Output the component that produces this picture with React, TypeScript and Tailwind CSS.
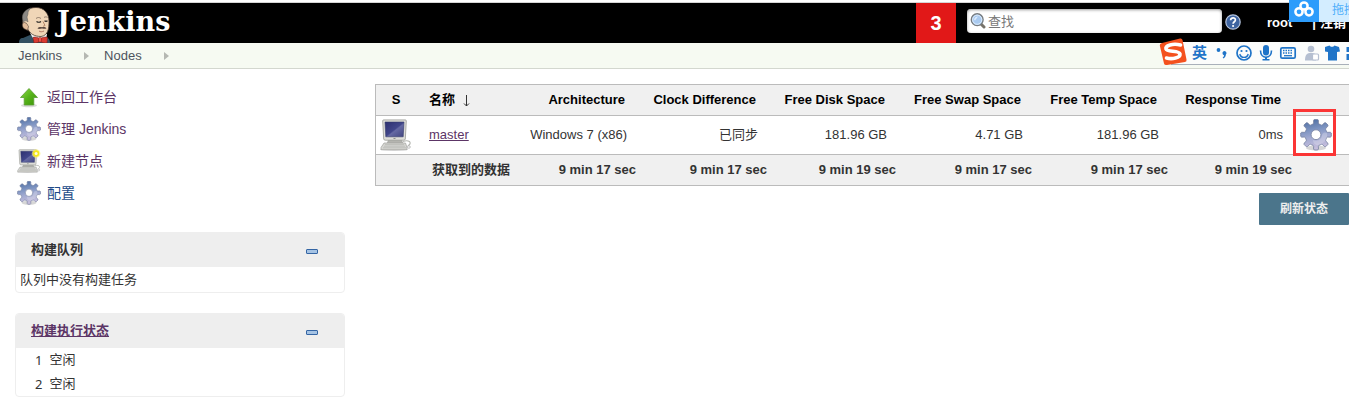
import React, { useId } from 'react';

const TEETH = 8;

function gearPath(cx: number, cy: number, outer: number, inner: number) {
  const points: string[] = [];
  for (let i = 0; i < TEETH; i++) {
    const a = (i * 2 * Math.PI) / TEETH - Math.PI / 2;
    const corners: [number, number][] = [
      [-0.39, inner],
      [-0.27, inner],
      [-0.2, inner + 0.9],
      [-0.17, outer - 0.9],
      [-0.11, outer],
      [0.11, outer],
      [0.17, outer - 0.9],
      [0.2, inner + 0.9],
      [0.27, inner],
    ];
    for (const [offset, r] of corners) {
      points.push(`${(cx + r * Math.cos(a + offset)).toFixed(2)} ${(cy + r * Math.sin(a + offset)).toFixed(2)}`);
    }
  }
  return `M${points.join('L')}Z`;
}

function GearIcon({ className }: { className: string }) {
  const id = useId();
  return (
    <svg viewBox="0 0 32 32" className={className} aria-hidden="true">
      <defs>
        <linearGradient id={id} x1="0.3" y1="0" x2="0.5" y2="1">
          <stop offset="0" stopColor="#4f6fa3" />
          <stop offset="0.35" stopColor="#7f95c2" />
          <stop offset="0.6" stopColor="#a3abd2" />
          <stop offset="1" stopColor="#cbc0de" />
        </linearGradient>
      </defs>
      <ellipse cx="16" cy="29" rx="10" ry="2.6" fill="#000" opacity="0.16" />
      <path
        d={`${gearPath(16, 15.7, 15.4, 11)}M20.9 15.7a4.900 4.900 0 1 0-9.800 0a4.900 4.900 0 1 0 9.800 0Z`}
        fillRule="evenodd"
        fill={`url(#${id})`}
        stroke="#75809f"
        strokeWidth="0.8"
        strokeLinejoin="round"
      />
      <path d="M13 21c5 2 9-1 9-5c1-3 3-3 5-2c1 6-3 11-9 12c-3 0-5-2-5-5z" fill="#fff" opacity="0.22" />
    </svg>
  );
}

function ComputerIcon({ className, isNew = false }: { className: string; isNew?: boolean }) {
  const id = useId();
  return (
    <svg viewBox="0 0 32 32" className={className} aria-hidden="true">
      <defs>
        <linearGradient id={id} x1="0" y1="0" x2="1" y2="1">
          <stop offset="0" stopColor="#2c2f70" />
          <stop offset="0.5" stopColor="#41468a" />
          <stop offset="0.56" stopColor="#6569a3" />
          <stop offset="1" stopColor="#40447f" />
        </linearGradient>
      </defs>
      <ellipse cx="14" cy="30.5" rx="14" ry="1.4" fill="#000" opacity="0.15" />
      <path d="M9 20h12l2 4.500H7z" fill="#b4b4af" stroke="#999b96" strokeWidth="0.600" />
      <path d="M23 22.500c6-2 9 1 6 3.500l-1 1" fill="none" stroke="#b5b7b1" strokeWidth="1.100" />
      <path d="M4 24h21.500l1.500 4.500v2.200H1v-2.200z" fill="#d6d6d2" stroke="#a0a29d" strokeWidth="0.700" />
      <path d="M5 25.600h19M4 27.200h21M3 28.800h23" stroke="#b3b5b0" strokeWidth="0.700" />
      <path d="M3.700.9h21.600a1 1 0 0 1 1 1L25.300 20a1.500 1.500 0 0 1-1.500 1.200H5.200A1.500 1.500 0 0 1 3.700 20L2.700 1.900a1 1 0 0 1 1-1z" fill="#deded9" stroke="#999b96" strokeWidth="0.800" />
      <path d="M5 3h19l-.8 14.800H5.800z" fill={`url(#${id})`} stroke="#343a69" strokeWidth="0.600" />
      <path d="M13.500 19.500h2" stroke="#7a7c77" strokeWidth="0.800" />
      <ellipse cx="28.800" cy="28" rx="1.600" ry="1.300" fill="#eee" stroke="#aaa" strokeWidth="0.600" />
      {isNew && (
        <g>
          <circle cx="25.500" cy="6" r="5.800" fill="#fdf37a" opacity="0.65" />
          <circle cx="25.500" cy="6" r="4.200" fill="#f6e91a" />
          <circle cx="25.500" cy="6" r="2" fill="#fffde0" />
        </g>
      )}
    </svg>
  );
}

function UpIcon() {
  return (
    <svg viewBox="0 0 24 24" className="size-6" aria-hidden="true">
      <defs>
        <linearGradient id="up-green" x1="0" y1="0" x2="1" y2="1">
          <stop offset="0" stopColor="#8ddb45" />
          <stop offset="0.5" stopColor="#56b21a" />
          <stop offset="1" stopColor="#3c9407" />
        </linearGradient>
      </defs>
      <ellipse cx="12" cy="20.500" rx="8" ry="1.800" fill="#000" opacity="0.15" />
      <path d="M12 3.500 20.500 12.500h-3.700V20H7.200v-7.500H3.500z" fill="url(#up-green)" stroke="#5a9c33" strokeWidth="0.800" strokeLinejoin="round" />
    </svg>
  );
}

function Butler() {
  return (
    <svg viewBox="0 0 34 37" className="h-[37px] w-[34px]" aria-hidden="true">
      <path d="M1 37c0-3 1-5 4-5l7-3 16 2c3 1 4 3 4 6z" fill="#335061" />
      <path d="M12 27l4 7 5 2 7-2 1-6z" fill="#f5f5f5" />
      <path d="M5 14C4 6 10 1.500 18 1.500c8 0 13 6 13 13.500 0 8-1 14.500-8 15.500-7 0-11-3-13-7-4 0-6-7-5-9.500z" fill="#f0d6b7" stroke="#4a3b32" strokeWidth="0.800" />
      <path d="M5.500 16C2.500 9 6 4 13 2c-3 3-3 4-3 6l-1 3 1 5c-1-1-3-2-4.500 0z" fill="#8c8984" stroke="#5f5d59" strokeWidth="0.500" />
      <path d="M6.500 16.500c-3.500 0-2.500 6.500 1.500 7l1.500 1 1-4c-1-1-1-3.500-4-4z" fill="#e2bd9b" stroke="#4a3b32" strokeWidth="0.600" />
      <path d="M18 12.500c1.500-1.300 3.500-1.300 5 0M26 11.500c1-.8 2.500-.8 3.500 0" fill="none" stroke="#7a6759" strokeWidth="0.800" />
      <path d="M18.500 15.500q2.500 1.500 4.500 0M26.500 14.800q1.500 1.200 3 0" fill="none" stroke="#222" strokeWidth="1.100" />
      <path d="M25 15.500l2 4-2 .8" fill="none" stroke="#a37357" strokeWidth="0.800" />
      <path d="M19.500 22.500c1-1.500 3-1.700 4.500-1.200 1.500-.5 3.500-.3 4.500 1-1.500 1-3 .2-4.500.2s-3 1-4.500 0z" fill="#5b4a42" />
      <path d="M21 25c1.500 1 3 1 5 0" fill="none" stroke="#a3604f" strokeWidth="0.800" />
      <path d="M15 31.500c2-1 5 0 7 1.500 2-1.500 5-2.500 7.500-1.500L29 37c-3 0-5-.500-7-1.500-2 1-4 1.500-6 1.500z" fill="#d93a32" stroke="#7d1c16" strokeWidth="0.600" />
      <rect x="20.500" y="31.500" width="3" height="4.500" rx="1" fill="#ee5148" stroke="#7d1c16" strokeWidth="0.500" />
    </svg>
  );
}

function SearchIcon() {
  return (
    <svg viewBox="0 0 16 16" className="size-4 shrink-0" aria-hidden="true">
      <path d="M11 11l3 3" stroke="#77736a" strokeWidth="3" strokeLinecap="round" />
      <circle cx="7.200" cy="6.700" r="5.900" fill="#a9caf0" stroke="#777c80" strokeWidth="1.400" />
      <circle cx="7.200" cy="6.700" r="4.600" fill="none" stroke="#e3effc" strokeWidth="0.900" />
      <path d="M4 6.500c.5-2 2-3 4-3l-3 4z" fill="#dcebfc" />
    </svg>
  );
}

function HelpIcon() {
  return (
    <svg viewBox="0 0 16 16" className="size-4" aria-hidden="true">
      <circle cx="8" cy="8" r="7.200" fill="#3e64a0" stroke="#b4c3dc" strokeWidth="1.200" />
      <path d="M5.600 6.200C5.600 3 10.600 3.200 10.400 6c0 1.700-2.300 1.800-2.300 3.800" fill="none" stroke="#fff" strokeWidth="1.700" />
      <circle cx="8.100" cy="12" r="1.100" fill="#fff" />
    </svg>
  );
}

function Crumb() {
  return (
    <svg viewBox="0 0 5 8" className="mt-px h-2 w-[5px]" aria-hidden="true">
      <path d="M0 0l5 4-5 4z" fill="#b5b8b2" />
    </svg>
  );
}

function InputMethodBar() {
  return (
    <div className="absolute top-[38px] right-0 flex h-7 w-[190px] items-center overflow-hidden" aria-label="输入法">
      <div className="absolute top-1 right-0 left-3 h-[23px] border-b border-[#a9b0ba] bg-[#fbfcfb]" />
      <svg viewBox="0 0 190 28" className="relative h-7 w-[190px]" aria-hidden="true">
        <path d="M3 5L21 .500Q23 0 23.500 2L27.500 21.500Q28 23.500 26 24L8 27Q5.500 27.500 5 25.500L.800 7.500Q.500 5.500 3 5z" fill="#f4511e" />
        <path d="M21.500 7C14 5 6 7.500 7 11C8 14.500 20 12 21 16C21.500 20 13 21.500 7.500 20" fill="none" stroke="#fff" strokeWidth="3.600" strokeLinecap="round" />
        <g fill="#1f74c8">
          <circle cx="59.500" cy="12" r="1.900" />
          <path d="M63.500 15.300a2 2 0 1 1 3.400 1.200c-.2 2-1 3.200-2.600 4l-.6-1c1-.6 1.300-1.300 1.300-2.200a2 2 0 0 1-1.500-2z" />
          <rect x="104" y="7" width="6" height="10.500" rx="3" />
          <rect x="106" y="19" width="2" height="3" />
          <rect x="103.500" y="21" width="7" height="1.500" />
          <path d="M166 9l4.500-1.500c1 1.700 4 1.700 5 0L180 9l1 4.500-3 .5v8.500h-9V14l-3-.5z" />
          <path d="M187.500 9h3v5h-3zM187.500 16h3v6h-3z" />
        </g>
        <path d="M101.500 12.500c0 9 11 9 11 0" fill="none" stroke="#1f74c8" strokeWidth="1.600" />
        <circle cx="85" cy="15" r="7" fill="none" stroke="#1f74c8" strokeWidth="1.700" />
        <path d="M80.800 16c1 4.500 7.400 4.500 8.400 0" fill="none" stroke="#1f74c8" strokeWidth="1.400" />
        <circle cx="82.500" cy="13" r="1.100" fill="#1f74c8" />
        <circle cx="87.500" cy="13" r="1.100" fill="#1f74c8" />
        <rect x="121.800" y="9.800" width="14.400" height="10.400" rx="1.500" fill="none" stroke="#1f74c8" strokeWidth="1.700" />
        <path d="M124 12.500h10M124 15h10" stroke="#1f74c8" strokeWidth="1.500" strokeDasharray="1.500 1" />
        <path d="M125 17.700h8" stroke="#1f74c8" strokeWidth="1.300" />
        <g fill="#b5bfd1">
          <circle cx="152" cy="11" r="3.300" />
          <path d="M146 22.500c0-6 2-7.500 6-7.500s5 1 5 3v4.500z" />
          <rect x="153.500" y="16" width="6" height="6" rx="1" fill="#fff" stroke="#b5bfd1" strokeWidth="1.200" />
        </g>
      </svg>
      <span className="absolute top-[3px] left-[33px] text-[15px] leading-6 font-bold text-[#1f74c8]">英</span>
    </div>
  );
}

function UploadOverlay() {
  return (
    <div className="absolute top-0 right-0 flex h-[22px] w-[60px] overflow-hidden bg-[#d3edff]">
      <div className="flex w-[30px] shrink-0 items-center justify-center bg-[#2d9cfb]">
        <svg viewBox="0 0 20 16" className="mb-1 h-4 w-5" fill="none" stroke="#fff" strokeWidth="2.500" aria-hidden="true">
          <circle cx="10" cy="5" r="3.600" />
          <circle cx="5" cy="10.800" r="3.600" />
          <circle cx="15" cy="10.800" r="3.600" />
        </svg>
      </div>
      <span className="ml-[13px] shrink-0 text-xs leading-5 text-[#4daefa]">拖拽</span>
    </div>
  );
}

function Header() {
  return (
    <header className="relative pt-[2px]">
      <div className="flex h-[41px] items-center justify-between border-t border-[#d5d5d5] bg-black text-white">
        <a href="#home" className="flex h-10 items-start gap-[6px] pl-[18px]">
          <span className="mt-[3px] -mr-px"><Butler /></span>
          <span className="font-['DejaVu_Serif',serif] text-[27px] leading-[38px] font-bold">Jenkins</span>
        </a>
        <div className="flex h-10 items-center pr-[3px]">
          <a href="#monitors" className="mr-[11px] flex h-10 w-10 items-center justify-center bg-[#e11818] text-xl font-bold">3</a>
          <form className="mb-1 flex h-6 w-[255px] items-center gap-[2px] rounded bg-white pl-[3px] shadow-[inset_0_1px_3px_#999]">
            <SearchIcon />
            <input aria-label="查找" placeholder="查找" className="h-6 min-w-0 flex-1 bg-transparent text-[13px] text-[#333] outline-none placeholder:text-[#777]" />
          </form>
          <a href="#help" aria-label="帮助" className="mb-[2px] ml-[3px]"><HelpIcon /></a>
          <a href="#root" className="ml-[26px] text-[13px] font-bold">root</a>
          <span className="ml-5 flex gap-1 text-[13px] font-bold">
            <span>|</span>
            <a href="#logout">注销</a>
          </span>
        </div>
      </div>
      <nav aria-label="路径" className="flex h-[26px] items-center border-b border-[#d3d7cf] bg-[#f6faf2] pl-[18px] text-[13px] text-[#4d545d]">
        <a href="#jenkins" className="mr-[22px]">Jenkins</a>
        <Crumb />
        <a href="#nodes" className="mr-[22px] ml-[15px]">Nodes</a>
        <Crumb />
      </nav>
      <UploadOverlay />
      <InputMethodBar />
    </header>
  );
}

const tasks = [
  { label: '返回工作台', icon: <UpIcon />, color: 'text-[#5c3566]' },
  { label: '管理 Jenkins', icon: <GearIcon className="size-6" />, color: 'text-[#5c3566]' },
  { label: '新建节点', icon: <ComputerIcon className="size-6" isNew />, color: 'text-[#5c3566]' },
  { label: '配置', icon: <GearIcon className="size-6" />, color: 'text-[#204a87]' },
];

function Pane({ title, children }: { title: React.ReactNode; children: React.ReactNode }) {
  return (
    <section className="overflow-hidden rounded border border-[#eeeeee]">
      <div className="flex h-[34px] items-center justify-between bg-[#eeeeee] pr-[26px] pl-[15px]">
        <h2 className="text-[13px] font-bold text-[#333]">{title}</h2>
        <button type="button" aria-label="折叠" className="mt-[2px] h-[5px] w-3 rounded-[1px] border border-[#3465a4] bg-[#a5c3e4]" />
      </div>
      {children}
    </section>
  );
}

function Sidebar() {
  return (
    <aside className="flex w-[330px] shrink-0 flex-col gap-5">
      <ul className="mb-[7px] flex flex-col gap-2 pl-[2px]">
        {tasks.map((task) => (
          <li key={task.label}>
            <a href="#task" className={`flex h-6 items-center gap-[6px] text-sm leading-6 ${task.color}`}>
              {task.icon}
              {task.label}
            </a>
          </li>
        ))}
      </ul>
      <Pane title="构建队列">
        <p className="px-1 text-[13px] leading-[25px]">队列中没有构建任务</p>
      </Pane>
      <Pane title={<a href="#executors" className="text-[#5c3566] underline">构建执行状态</a>}>
        <ol className="pl-[19px] text-[13px] leading-6">
          {[1, 2].map((n) => (
            <li key={n} className="flex gap-[7px]">
              <span className="font-['Noto_Sans',sans-serif]">{n}</span>
              <span>空闲</span>
            </li>
          ))}
        </ol>
      </Pane>
    </aside>
  );
}

const columns = [
  { name: 'Architecture', value: 'Windows 7 (x86)', age: '9 min 17 sec' },
  { name: 'Clock Difference', value: '已同步', age: '9 min 17 sec' },
  { name: 'Free Disk Space', value: '181.96 GB', age: '9 min 19 sec' },
  { name: 'Free Swap Space', value: '4.71 GB', age: '9 min 17 sec' },
  { name: 'Free Temp Space', value: '181.96 GB', age: '9 min 17 sec' },
  { name: 'Response Time', value: '0ms', age: '9 min 19 sec' },
];

function NodesTable() {
  return (
    <table className="w-full table-fixed border-separate border-spacing-0 border-t border-l border-[#bbbbbb] text-[13px] whitespace-nowrap">
      <colgroup>
        <col className="w-10" />
        <col className="w-[96px]" />
        <col className="w-[124px]" />
        <col className="w-[131px]" />
        <col className="w-[129px]" />
        <col className="w-[136px]" />
        <col className="w-[136px]" />
        <col className="w-[124px]" />
        <col />
      </colgroup>
      <thead>
        <tr className="h-[31px] bg-[#f0f0f0] text-black [&>*]:border-b [&>*]:border-[#bbbbbb]">
          <th className="text-center">S</th>
          <th className="pl-[13px] text-left">
            名称 <svg viewBox="0 0 7 12" className="ml-1 inline h-3 w-[7px]" fill="none" stroke="#333" aria-hidden="true">
              <path d="M3.500 0v11M1 8.500l2.500 2.500L6 8.500" />
            </svg>
          </th>
          {columns.map((c) => (
            <th key={c.name} className="pr-[11px] text-right">{c.name}</th>
          ))}
          <td />
        </tr>
      </thead>
      <tbody>
        <tr className="h-[39px] [&>*]:border-b [&>*]:border-[#bbbbbb]">
          <td className="pl-1"><ComputerIcon className="size-8" /></td>
          <td className="pl-[13px]"><a href="#master" className="text-[#5c3566] underline">master</a></td>
          {columns.map((c) => (
            <td key={c.name} className="pr-[9px] text-right">{c.value}</td>
          ))}
          <td className="relative pl-2">
            <a href="#configure" aria-label="配置 master" className="block w-8"><GearIcon className="size-8" /></a>
            <span className="pointer-events-none absolute -top-[7px] left-px h-[47px] w-[43px] border-3 border-[#fb3535]" />
          </td>
        </tr>
        <tr className="h-[31px] bg-[#f0f0f0] font-bold [&>*]:border-b [&>*]:border-[#bbbbbb]">
          <td />
          <th className="pl-4 text-left">获取到的数据</th>
          {columns.map((c) => (
            <td key={c.name} className="text-right">{c.age}</td>
          ))}
          <td />
        </tr>
      </tbody>
    </table>
  );
}

export default function App() {
  return (
    <div className="overflow-hidden bg-white font-['Liberation_Sans','Noto_Sans_CJK_SC',sans-serif] text-[#333]">
      <Header />
      <div className="flex gap-[30px] pl-[15px]">
        <div className="pt-4 pb-1"><Sidebar /></div>
        <main className="min-w-0 flex-1 pt-[15px]">
          <NodesTable />
          <div className="mt-[7px] flex justify-end">
            <button type="button" className="h-8 w-[90px] rounded-[1px] bg-[#4b758b] text-xs font-bold text-[#eeeeee]">刷新状态</button>
          </div>
        </main>
      </div>
    </div>
  );
}
